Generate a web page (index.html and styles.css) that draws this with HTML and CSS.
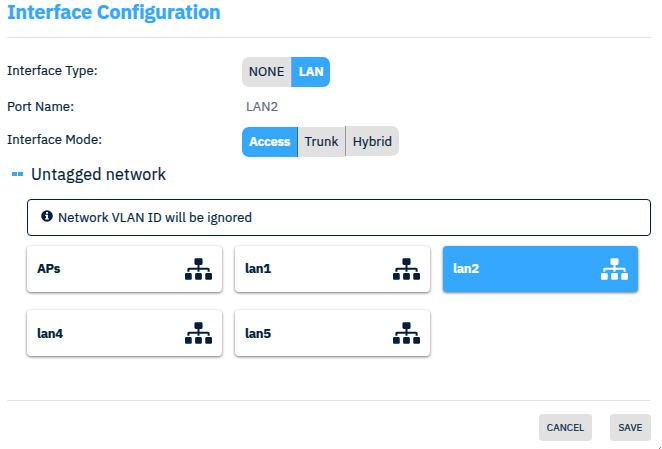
FILE: index.html
```html
<!DOCTYPE html>
<html lang="en">
<head>
<meta charset="utf-8">
<title>Interface Configuration</title>
<link rel="stylesheet" href="styles.css">
</head>
<body>
<svg width="0" height="0" class="defs">
  <symbol id="sitemap" viewBox="0 0 640 512"><path d="M128 352H32c-17.67 0-32 14.33-32 32v96c0 17.67 14.33 32 32 32h96c17.67 0 32-14.33 32-32v-96c0-17.67-14.33-32-32-32zm-24-80h192v48h48v-48h192v48h48v-57.59c0-21.17-17.23-38.41-38.41-38.41H344v-64h40c17.67 0 32-14.33 32-32V32c0-17.67-14.33-32-32-32H256c-17.67 0-32 14.33-32 32v96c0 17.67 14.33 32 32 32h40v64H94.41C73.23 224 56 241.23 56 262.41V320h48v-48zm264 80h-96c-17.67 0-32 14.33-32 32v96c0 17.67 14.33 32 32 32h96c17.67 0 32-14.33 32-32v-96c0-17.67-14.33-32-32-32zm240 0h-96c-17.67 0-32 14.33-32 32v96c0 17.67 14.33 32 32 32h96c17.67 0 32-14.33 32-32v-96c0-17.67-14.33-32-32-32z"/></symbol>
</svg>
<main class="dialog">
  <h1 class="title"><span>Interface Configuration</span></h1>
  <div class="row row-type">
    <span class="label l-type">Interface Type:</span>
    <div class="toggle"><span class="opt w-none">NONE</span><span class="opt active w-lan">LAN</span></div>
  </div>
  <div class="row row-port">
    <span class="label l-port">Port Name:</span>
    <span class="value">LAN2</span>
  </div>
  <div class="row row-mode">
    <span class="label l-mode">Interface Mode:</span>
    <div class="toggle"><span class="opt active w-access">Access</span><span class="opt w-trunk">Trunk</span><span class="opt raised w-hybrid">Hybrid</span></div>
  </div>
  <h2 class="section"><i class="dash"></i><i class="dash"></i><span>Untagged network</span></h2>
  <div class="notice">
    <svg class="info" viewBox="0 0 12 12"><circle cx="6" cy="6" r="5.8" fill="#001f3d"/><path d="M5 2h2v1.8H5zM4.2 4.8H7v3.4h.8v1.3H4.2V8.200H5V6h-.8z" fill="#fff"/></svg>
    <span>Network VLAN ID will be ignored</span>
  </div>
  <div class="cards">
    <div class="card"><b class="aps">APs</b><svg><use href="#sitemap"/></svg></div>
    <div class="card"><b>lan1</b><svg><use href="#sitemap"/></svg></div>
    <div class="card selected"><b>lan2</b><svg><use href="#sitemap"/></svg></div>
    <div class="card low"><b>lan4</b><svg><use href="#sitemap"/></svg></div>
    <div class="card low"><b>lan5</b><svg><use href="#sitemap"/></svg></div>
  </div>
  <footer class="actions"><span class="btn cancel">CANCEL</span><span class="btn save">SAVE</span></footer>
</main>
<svg class="grip" viewBox="0 0 3 3"><path d="M0 2h1v1H0zM1 1h1v1H1z" fill="#777"/></svg>
</body>
</html>
```
FILE: styles.css
```css
* { box-sizing: border-box; }
body {
  margin: 0;
  height: 449px;
  overflow: hidden;
  background: #fff;
  color: #001f3d;
  font: 400 13px/20px "IBM Plex Sans", "Noto Sans", sans-serif;
  letter-spacing: 0.13px;
  -webkit-text-stroke: 0.2px currentColor;
  white-space: nowrap;
}
.defs { position: absolute; }
.dialog { width: 644px; margin-left: 7px; }
.title {
  margin: 0;
  height: 38px;
  border-bottom: 1px solid #e1e1e1;
  color: #36a7ff;
  font-size: 20px;
  font-weight: 700;
  line-height: 24px;
  letter-spacing: -0.3px;
}
.row { display: flex; align-items: center; }
.row-type { height: 30px; margin-top: 19px; }
.row-port { height: 20px; margin-top: 10px; }
.row-mode { height: 31px; margin-top: 9px; align-items: flex-start; }
.label { width: 235px; }
.l-type { margin-top: -3px; }
.l-mode { margin-top: 4px; }
.value { padding-left: 4px; color: #5c6b80; letter-spacing: 0.1px; }
.toggle { display: flex; }
.row-mode .toggle { padding-top: 1px; }
.opt {
  height: 30px;
  line-height: 30px;
  background: #e1e1e1;
  text-align: center;
}
.opt + .opt { border-left: 1px solid #999; }
.opt:first-child { border-radius: 7px 0 0 7px; }
.opt:last-child { border-radius: 0 7px 7px 0; }
.toggle .active { background: #36a7ff; border-left-color: #8aa6bd; color: #fff; font-weight: 700; letter-spacing: -0.25px; }
.active + .opt { border-left-color: #2273b4; }
.raised { margin-top: -1px; line-height: 32px; }
.w-none { width: 49px; }
.w-lan { width: 39px; }
.w-access { width: 55px; }
.w-trunk { width: 48px; }
.w-hybrid { width: 54px; }
.section {
  display: flex;
  align-items: center;
  height: 24px;
  margin: 5px 0 0 5px;
  font-size: 16px;
  font-weight: 400;
  letter-spacing: 0.22px;
}
.section span { margin-left: 7px; margin-top: -1px; }
.dash { width: 5px; height: 4px; margin-right: 1px; background: #36a7ff; }
.notice {
  display: flex;
  align-items: center;
  height: 37px;
  margin: 13px 0 0 20px;
  padding-left: 13px;
  border: 1px solid #001f3d;
  border-radius: 4px;
}
.info { width: 12px; height: 12px; margin: -4px 5px 0 0; }
.cards {
  display: grid;
  grid-template-columns: repeat(3, 195px);
  grid-auto-rows: 46px;
  gap: 18px 13px;
  margin: 10px 0 0 20px;
}
.card {
  display: flex;
  align-items: center;
  justify-content: space-between;
  padding: 0 10px;
  border-radius: 4px;
  background: #fff;
  box-shadow: 0 1px 3px rgba(0, 0, 0, .55);
  letter-spacing: -0.3px;
}
.low b { margin-top: 2px; }
.card svg { width: 27px; height: 22px; fill: currentColor; }
.card.selected { background: #36a7ff; color: #fff; }
.actions {
  display: flex;
  justify-content: flex-end;
  gap: 18px;
  margin-top: 44px;
  padding-top: 13px;
  border-top: 1px solid #e1e1e1;
}
.btn {
  height: 27px;
  border-radius: 4px;
  background: #e1e1e1;
  font-size: 10px;
  letter-spacing: 0.1px;
  line-height: 27px;
  text-align: center;
}
.cancel { width: 53px; }
.save { width: 41px; }
.grip { position: absolute; right: 0; bottom: 0; width: 3px; height: 3px; }
```
